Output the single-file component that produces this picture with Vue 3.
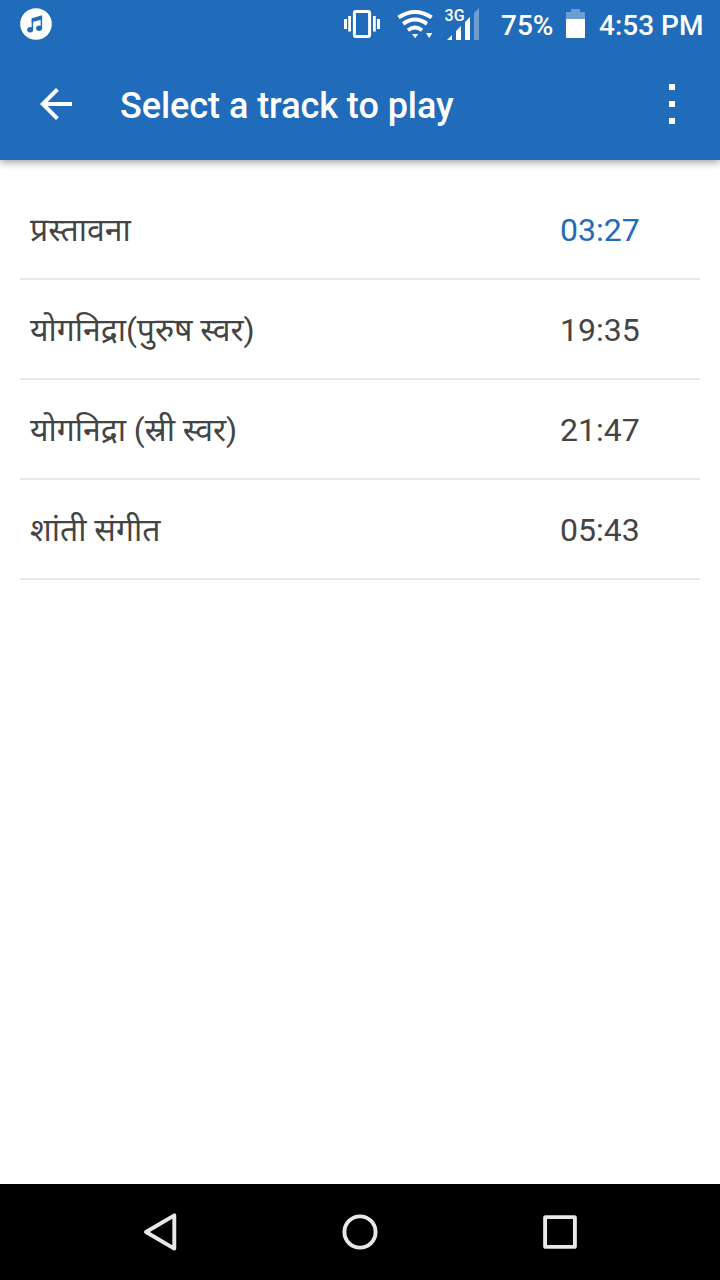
<template>
  <div class="screen">
    <div class="status-bar">
      <svg class="music" width="32" height="32" viewBox="0 0 32 32">
        <circle cx="16" cy="16" r="15.8" fill="#fff" />
        <path d="M12.4 21.8V11.5M21.4 20V9" fill="none" stroke="#206bba" stroke-width="1.5" />
        <path d="M11.7 10.3l10.4-3v4.2l-10.4 2.8z" fill="#206bba" />
        <ellipse cx="10.1" cy="21.8" rx="3" ry="2.7" fill="#206bba" />
        <ellipse cx="19.1" cy="20.2" rx="3" ry="2.7" fill="#206bba" />
      </svg>
      <div class="status-right">
        <svg width="36" height="48" viewBox="344 0 36 48" fill="#fff">
          <rect x="354.4" y="11.4" width="15.2" height="25.2" rx="1.5" fill="none" stroke="#fff" stroke-width="3" />
          <path d="M344 19h3v10h-3zM348.2 16h2.8v15.6h-2.8zM373 16h2.8v15.6H373zM377 19h3v10h-3z" />
        </svg>
        <svg class="wifi" width="36" height="48" viewBox="397 0 36 48">
          <g fill="none" stroke="#fff" stroke-width="3.9">
            <path d="M398.5 17.4Q415 6.4 431.7 17.4" />
            <path d="M403.2 23.8Q415 15.4 427 23.8" />
            <path d="M408 30.2Q415 25 422.1 30.2" />
          </g>
          <path d="M412 34h6.2l-3.1 4.2zM426 33h6.4l-3.2 5z" fill="#fff" />
        </svg>
        <svg class="signal" width="36" height="48" viewBox="444 0 36 48" fill="#fff">
          <text class="network" x="444.6" y="20.8">3G</text>
          <path d="M447 40l5-5v5zM456 40v-9l5-5v14zM465 40V22l5-5v23z" />
          <path d="M474 40V13l5-5v32z" opacity=".35" />
        </svg>
        <span class="percent">75%</span>
        <svg class="battery" width="19" height="48" viewBox="566 0 19 48" fill="#fff">
          <path d="M566 12h5V9h9v3h5v7h-19z" opacity=".35" />
          <path d="M566 19h19v19h-19z" />
        </svg>
        <span class="clock">4:53 PM</span>
      </div>
    </div>

    <header class="toolbar">
      <button class="icon-btn back" aria-label="Back">
        <svg width="48" height="48" viewBox="0 0 24 24" fill="#fff"><path d="M20 11H7.83l5.59-5.59L12 4l-8 8 8 8 1.41-1.41L7.83 13H20v-2z" /></svg>
      </button>
      <h1 class="title">Select a track to play</h1>
      <button class="icon-btn" aria-label="Menu">
        <svg width="6" height="40" viewBox="0 0 6 40" fill="#fff"><path d="M0 0h6v6H0zM0 17h6v6H0zM0 34h6v6H0z" /></svg>
      </button>
    </header>

    <ul class="tracks">
      <li v-for="(track, index) in tracks" :key="track.name" class="track" @click="selected = index">
        <span class="name">{{ track.name }}</span>
        <span class="time" :class="{ active: selected === index }">{{ track.time }}</span>
      </li>
    </ul>

    <nav class="nav-bar">
      <svg width="40" height="48" viewBox="140 1208 40 48"><path d="M146 1232L174.3 1215.4v33.2z" /></svg>
      <svg width="40" height="48" viewBox="340 1208 40 48"><circle cx="360" cy="1232" r="15.6" /></svg>
      <svg width="40" height="48" viewBox="540 1208 40 48"><rect x="545.1" y="1217.1" width="29.8" height="29.8" rx=".6" /></svg>
    </nav>
  </div>
</template>

<script setup>
import { ref } from 'vue';

const selected = ref(0);

const tracks = [
  { name: 'प्रस्तावना', time: '03:27' },
  { name: 'योगनिद्रा(पुरुष स्वर)', time: '19:35' },
  { name: 'योगनिद्रा (स्री स्वर)', time: '21:47' },
  { name: 'शांती संगीत', time: '05:43' },
];
</script>

<style>
body { margin: 0; background: #fff; }
</style>

<style scoped>
.screen { width: 720px; height: 1280px; display: flex; flex-direction: column; background: #fff; font-family: Roboto, 'Noto Sans', sans-serif; overflow: hidden; }
svg { display: block; flex: none; }

.status-bar { position: relative; z-index: 1; height: 48px; padding: 0 16px 0 20px; display: flex; align-items: center; justify-content: space-between; background: #206bba; color: #fff; box-sizing: border-box; }
.status-right { display: flex; align-items: center; font-size: 28px; font-weight: 500; line-height: 48px; white-space: nowrap; }
.wifi { margin-left: 17px; }
.signal { margin-left: 11px; }
.network { font-size: 16px; font-weight: 500; }
.percent { width: 65px; margin-left: 21px; padding-top: 3px; }
.clock { width: 105px; margin-left: 14px; padding-top: 3px; }

.toolbar { height: 112px; padding: 0 45px 0 32px; display: flex; align-items: center; background: #206bba; box-sizing: border-box; box-shadow: 0 2px 8px rgba(0, 0, 0, 0.4); }
.icon-btn { padding: 0; border: none; background: none; cursor: pointer; }
.title { flex: 1; margin: 4px 0 0 40px; color: #fff; font-size: 36px; font-weight: 500; line-height: 42px; letter-spacing: -0.05px; }

.tracks { flex: 1; margin: 0; padding: 20px 20px 0; list-style: none; }
.track { height: 100px; padding: 2px 10px 0; display: flex; align-items: center; border-bottom: 2px solid #e8e8e8; box-sizing: border-box; color: #444; font-size: 32px; line-height: 40px; }
.name { flex: 1; letter-spacing: -0.06px; }
.time { width: 130px; }
.time.active { color: #206bba; }

.nav-bar { height: 96px; padding: 0 140px; display: flex; align-items: center; justify-content: space-between; background: #000; box-sizing: border-box; }
.nav-bar svg { fill: none; stroke: #e8e8e8; stroke-width: 3.9; stroke-linejoin: round; }
</style>
